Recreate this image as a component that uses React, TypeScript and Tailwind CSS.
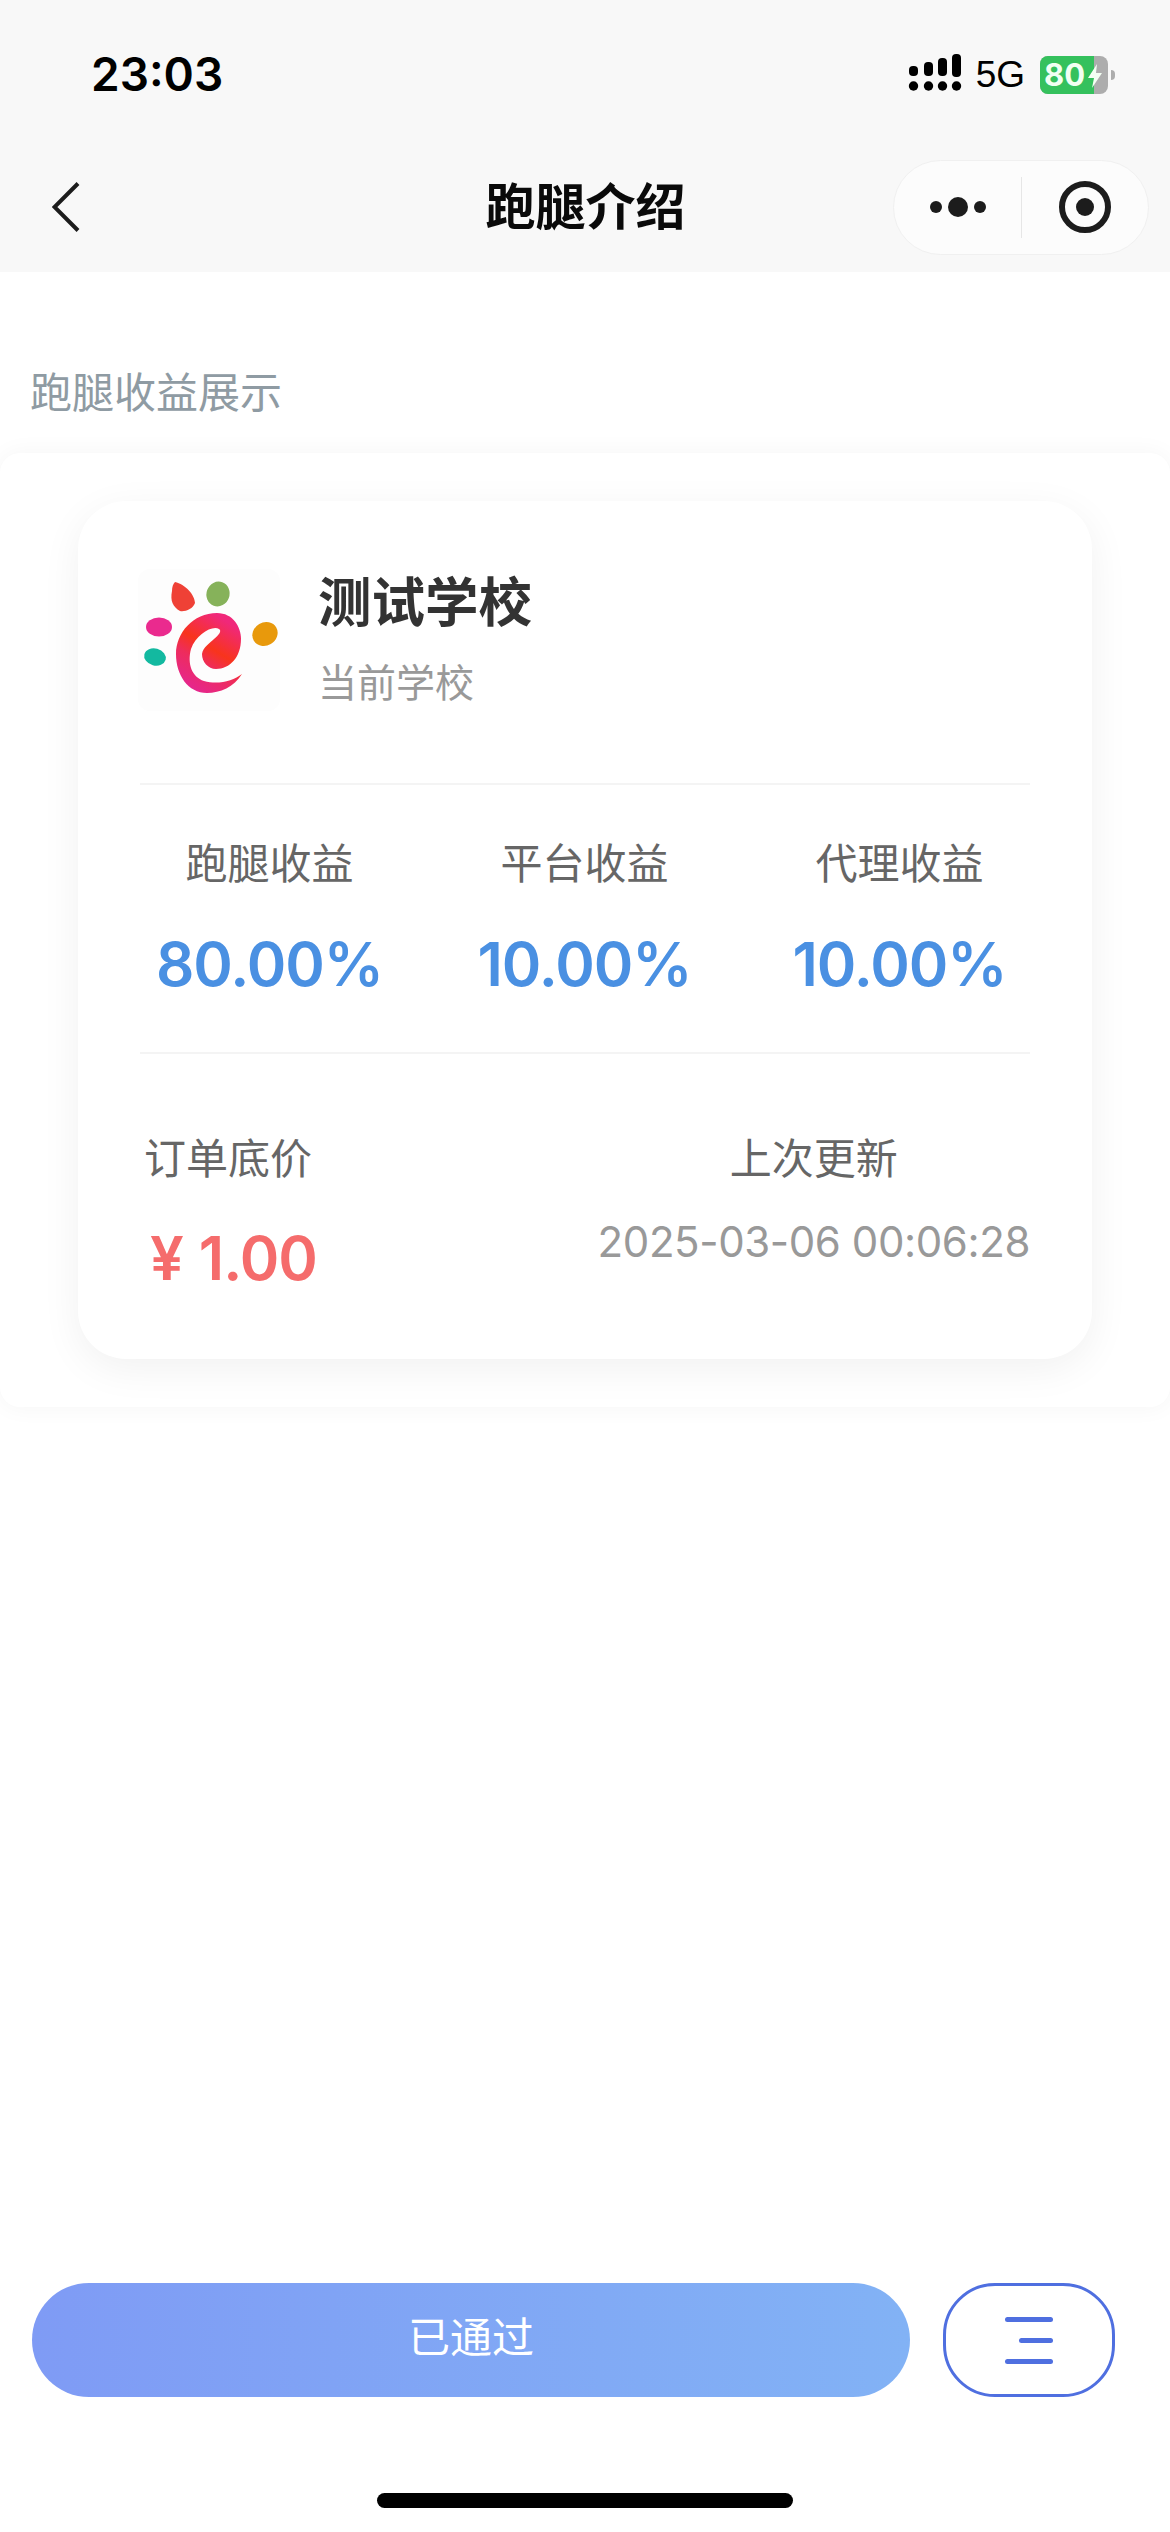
const cjk = "font-['Inter','Noto_Sans_CJK_SC',sans-serif]";

function SignalIcon() {
  return (
    <svg width="56" height="44" viewBox="0 0 56 44" fill="#000">
      {/* top row, growing bars */}
      <rect x="1" y="13" width="9" height="10" rx="4" />
      <rect x="16" y="9" width="9" height="14" rx="4" />
      <rect x="30" y="5" width="9" height="18" rx="4" />
      <rect x="44" y="1" width="9" height="23" rx="4" />
      {/* bottom row, dots */}
      <circle cx="5.5" cy="33" r="4.7" />
      <circle cx="20.5" cy="33" r="4.7" />
      <circle cx="34.5" cy="33" r="4.7" />
      <circle cx="48.5" cy="33" r="4.7" />
    </svg>
  );
}

function BatteryIcon() {
  return (
    <div className="flex items-center">
      <div className="relative flex h-[38px] w-[68px] items-center overflow-hidden rounded-[8px] bg-[#adadad]">
        <div className="h-full w-[54px] bg-[#35c15d]" />
        <span className="absolute left-[4px] top-0 font-['Inter',sans-serif] text-[31px] font-bold leading-[38px] text-[#f2fff2]">
          80
        </span>
        <svg className="absolute left-[47px] top-[8px]" width="16" height="24" viewBox="0 0 16 24" fill="#f4fff4">
          <path d="M10 0 L1 14 H7 L5 24 L15 9 H9 Z" />
        </svg>
      </div>
      <div className="ml-[3px] h-[10px] w-[4px] rounded-r-full bg-[#adadad]" />
    </div>
  );
}

function CapsuleMenu() {
  return (
    <div className="flex h-[95px] w-[256px] items-center rounded-full border border-[#f0f0f0] bg-[#fcfcfc]">
      <div className="flex w-[127px] items-center justify-center">
        <svg width="56" height="24" viewBox="0 0 56 24" fill="#1c1c1c">
          <circle cx="6" cy="12" r="6" />
          <circle cx="28" cy="12" r="10" />
          <circle cx="50" cy="12" r="6" />
        </svg>
      </div>
      <div className="h-[61px] w-px bg-[#e6e6e6]" />
      <div className="flex flex-1 items-center justify-center">
        <svg width="56" height="56" viewBox="0 0 56 56" fill="none">
          <circle cx="28" cy="28" r="23" stroke="#1c1c1c" strokeWidth="6" />
          <circle cx="28" cy="28" r="9" fill="#1c1c1c" />
        </svg>
      </div>
    </div>
  );
}

function SchoolLogo() {
  return (
    <div className="-ml-[2px] h-[142px] w-[142px] rounded-[12px] bg-[#fdfdfd]">
      <svg width="142" height="142" viewBox="0 0 142 142">
        <defs>
          <linearGradient id="swirl" x1="0.75" y1="0.1" x2="0.3" y2="1">
            <stop offset="0" stopColor="#f0287a" />
            <stop offset="0.4" stopColor="#f8341c" />
            <stop offset="0.62" stopColor="#ee2c5c" />
            <stop offset="1" stopColor="#e52690" />
          </linearGradient>
        </defs>
        <path d="M37 13 C47 15 57 26 57 34 C55 40 47 43 42 42 C35 38 32 32 34 22 C34 18 35 15 37 13 Z" fill="#ef4136" />
        <ellipse cx="80" cy="25" rx="11.5" ry="12.5" transform="rotate(20 80 25)" fill="#86b25a" />
        <ellipse cx="21" cy="58" rx="13" ry="9.5" fill="#ea2a8e" />
        <ellipse cx="17" cy="88" rx="11" ry="8.5" transform="rotate(15 17 88)" fill="#13b9a0" />
        <ellipse cx="127" cy="65" rx="13" ry="11.5" transform="rotate(-30 127 65)" fill="#e8990c" />
        <path
          d="M79 44 C95 44 103 58 103 70 C103 88 92 100 78 100 C70 100 64 93 64 85 C65 78 72 74 76 70 C81 66 84 62 81 60 C74 56 58 66 53 80 C49 95 54 108 66 112 C80 116 95 112 104 105 C96 118 82 124 69 124 C50 124 38 106 38 85 C38 64 55 44 79 44 Z"
          fill="url(#swirl)"
        />
      </svg>
    </div>
  );
}

function Stat({ label, value }: { label: string; value: string }) {
  return (
    <div className="flex flex-col items-center">
      <span className="text-[42px] leading-[58px] text-[#666]">{label}</span>
      <span className="mt-[35px] text-[60px] font-semibold leading-[72px] tracking-[-1px] text-[#4a90e2]">{value}</span>
    </div>
  );
}

function MenuIcon() {
  return (
    <div className="flex w-[48px] flex-col items-end gap-[16px]">
      <div className="h-[5px] w-[48px] rounded-full bg-[#4f6fe0]" />
      <div className="h-[5px] w-[34px] rounded-full bg-[#4f6fe0]" />
      <div className="h-[5px] w-[48px] rounded-full bg-[#4f6fe0]" />
    </div>
  );
}

export default function App() {
  return (
    <div className={`flex h-[2532px] w-[1170px] flex-col overflow-hidden bg-white ${cjk}`}>
      {/* Status bar + nav */}
      <header className="h-[272px] bg-[#f8f8f8]">
        <div className="flex h-[152px] items-start justify-between pl-[91px] pr-[55px] pt-[45px]">
          <span className="font-['Inter',sans-serif] text-[46px] font-semibold leading-[58px] text-black">23:03</span>
          <div className="flex items-center pt-[8px]">
            <SignalIcon />
            <span className="ml-[12px] font-['Liberation_Sans',sans-serif] text-[37px] leading-[44px] text-black">5G</span>
            <div className="ml-[15px]">
              <BatteryIcon />
            </div>
          </div>
        </div>
        <div className="grid h-[110px] grid-cols-[1fr_auto_1fr] items-center pl-[52px] pr-[21px]">
          <svg width="28" height="50" viewBox="0 0 28 50" fill="none">
            <path d="M26 1.5 L2.5 25 L26 48.5" stroke="#1c1c1c" strokeWidth="4" />
          </svg>
          <h1 className="pr-[30px] text-[50px] font-bold leading-[70px] text-[#0a0a0a]">跑腿介绍</h1>
          <div className="justify-self-end">
            <CapsuleMenu />
          </div>
        </div>
      </header>

      <p className="mt-[92px] pl-[30px] text-[42px] leading-[58px] text-[#8f9ba3]">跑腿收益展示</p>

      {/* Panel */}
      <section className="mt-[31px] rounded-[20px] bg-white px-[78px] pb-[48px] pt-[48px] shadow-[0_0_24px_rgba(0,0,0,0.045)]">
        <div className="h-[858px] rounded-[48px] bg-white px-[62px] shadow-[0_10px_40px_rgba(0,0,0,0.06)]">
          <div className="flex h-[284px] items-start border-b-2 border-[#f4f4f4] pt-[68px]">
            <SchoolLogo />
            <div className="-mt-[2px] ml-[38px] flex flex-col">
              <span className="text-[53.5px] font-bold leading-[72px] text-[#333]">测试学校</span>
              <span className="mt-[16px] text-[39px] leading-[56px] text-[#999]">当前学校</span>
            </div>
          </div>

          <div className="h-[269px] border-b-2 border-[#f4f4f4] pt-[50px]">
            <div className="-ml-[28px] grid w-[945px] grid-cols-3">
              <Stat label="跑腿收益" value="80.00%" />
              <Stat label="平台收益" value="10.00%" />
              <Stat label="代理收益" value="10.00%" />
            </div>
          </div>

          <div className="flex justify-between pt-[76px]">
            <div className="flex flex-col pl-[4px]">
              <span className="text-[42px] leading-[58px] text-[#666]">订单底价</span>
              <span className="mt-[34px] pl-[6px] text-[60px] font-semibold leading-[72px] tracking-[-1px] text-[#f56c6c]">
                <span className="mr-[16px]">¥</span>1.00
              </span>
            </div>
            <div className="flex flex-col items-center">
              <span className="text-[42px] leading-[58px] text-[#666]">上次更新</span>
              <span className="mt-[26px] font-['Inter',sans-serif] text-[42px] leading-[56px] tracking-[-0.4px] text-[#999]">2025-03-06 00:06:28</span>
            </div>
          </div>
        </div>
      </section>

      {/* Bottom actions */}
      <div className="mt-auto flex gap-[33px] pl-[32px]">
        <button className="h-[114px] w-[878px] rounded-full bg-gradient-to-r from-[#7f9bf5] to-[#82b2f5] pb-[5px] text-[42px] text-white">
          已通过
        </button>
        <button className="flex h-[114px] w-[172px] items-center justify-center rounded-[52px] border-[3px] border-[#4f6fe0] bg-white">
          <MenuIcon />
        </button>
      </div>

      {/* Home indicator */}
      <div className="mx-auto mb-[24px] mt-[96px] h-[15px] w-[416px] rounded-full bg-black" />
    </div>
  );
}
